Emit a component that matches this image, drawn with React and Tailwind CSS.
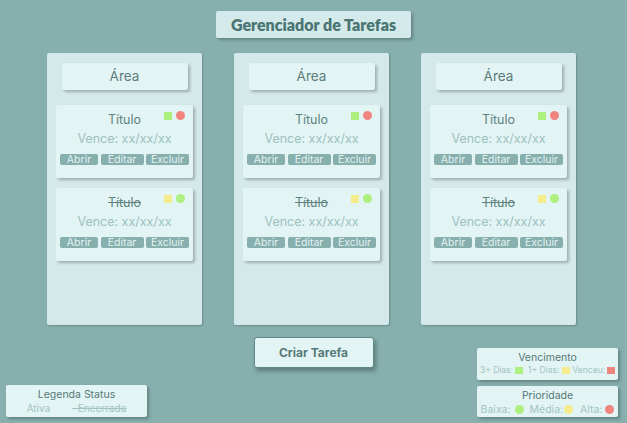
import React from 'react';

const areas = [1, 2, 3];

const tasks = [
  { id: 1, done: false, due: 'bg-[#adf07f]', prio: 'bg-[#f0847f]' },
  { id: 2, done: true, due: 'bg-[#f5ec8c]', prio: 'bg-[#adf07f]' }
];

const TaskCard = ({ task }) => (
  <div className="relative h-[73px] w-[137px] bg-[#e3f4f4] rounded-[2px] shadow-[2px_2px_3px_rgba(0,0,0,0.25)] flex flex-col items-center">
    <div className="absolute top-[6px] right-[8px] flex items-center gap-[4px]">
      <span className={`w-[8px] h-[8px] ${task.due}`}></span>
      <span className={`w-[9px] h-[9px] rounded-full ${task.prio}`}></span>
    </div>
    <p className={`mt-[7px] text-[12.5px] leading-[16px] text-[#5f8280] ${task.done ? 'line-through' : ''}`}>Título</p>
    <p className="mt-[3px] text-[12.5px] leading-[16px] text-[#9cc2c0]">Vence: xx/xx/xx</p>
    <div className="mt-[7px] w-full px-[4px] flex justify-between">
      <button className="w-[38px] h-[11px] bg-[#86afad] rounded-[2px] text-[10.5px] leading-[11px] text-[#e4f2f2]">Abrir</button>
      <button className="w-[43px] h-[11px] bg-[#86afad] rounded-[2px] text-[10.5px] leading-[11px] text-[#e4f2f2]">Editar</button>
      <button className="w-[43px] h-[11px] bg-[#86afad] rounded-[2px] text-[10.5px] leading-[11px] text-[#e4f2f2]">Excluir</button>
    </div>
  </div>
);

const Column = () => (
  <div className="w-[155px] h-[272px] bg-[#d4e9ea] rounded-[2px] shadow-[1px_1px_2px_rgba(0,0,0,0.2)] flex flex-col items-center pt-[10px]">
    <div className="w-[126px] h-[27px] bg-[#e3f4f4] rounded-[2px] shadow-[2px_2px_3px_rgba(0,0,0,0.25)] flex items-center justify-center text-[13.5px] text-[#5a7c7b]">
      Área
    </div>
    <div className="mt-[15px] flex flex-col gap-[10px]">
      {tasks.map(t => <TaskCard key={t.id} task={t} />)}
    </div>
  </div>
);

const App = () => {
  return (
    <div className="w-[627px] h-[423px] bg-[#86afad] overflow-hidden flex flex-col items-center font-['Inter',sans-serif]">
      <div className="mt-[11px] w-[195px] h-[27px] bg-[#d4e9ea] rounded-[2px] shadow-[2px_2px_3px_rgba(0,0,0,0.25)] flex items-center justify-center">
        <h1 className="font-['Lato',sans-serif] font-extrabold text-[16px] text-[#4a7573]">Gerenciador de Tarefas</h1>
      </div>

      <div className="mt-[15px] flex gap-[32px] ml-[-4px]">
        {areas.map(a => <Column key={a} />)}
      </div>

      <div className="w-full flex-1 grid grid-cols-[1fr_auto_1fr] px-[6px] pb-[6px]">
        <div className="self-end">
          <div className="w-[141px] h-[32px] bg-[#e3f4f4] rounded-[2px] shadow-[2px_2px_3px_rgba(0,0,0,0.25)] flex flex-col items-center">
            <p className="mt-[3px] text-[10.5px] leading-[13px] text-[#557876]">Legenda Status</p>
            <div className="mt-[1px] flex gap-[22px] text-[10px] leading-[12px] text-[#a2c4c2]">
              <span>Ativa</span>
              <span className="line-through">&nbsp;&nbsp;Encerrada</span>
            </div>
          </div>
        </div>

        <div className="pt-[12px]">
          <button className="w-[120px] h-[31px] bg-[#e3f4f4] border border-[#5e8987] rounded-[3px] shadow-[2px_3px_4px_rgba(0,0,0,0.3)] text-[12px] font-bold text-[#567a78]">
            Criar Tarefa
          </button>
        </div>

        <div className="self-end flex flex-col items-end gap-[6px] pr-[3px]">
          <div className="w-[141px] h-[32px] bg-[#e3f4f4] rounded-[2px] shadow-[2px_2px_3px_rgba(0,0,0,0.25)] flex flex-col items-center">
            <p className="mt-[3px] text-[10.5px] leading-[13px] text-[#557876]">Vencimento</p>
            <div className="mt-[1px] flex items-center text-[8.5px] leading-[11px] text-[#a2c4c2]">
              <span>3+ Dias:</span>
              <span className="ml-[2px] w-[8px] h-[7px] bg-[#adf07f]"></span>
              <span className="ml-[5px]">1+ Dias:</span>
              <span className="ml-[3px] w-[8px] h-[7px] bg-[#f5ec8c]"></span>
              <span className="ml-[2px]">Venceu:</span>
              <span className="ml-[2px] w-[8px] h-[7px] bg-[#f0847f]"></span>
            </div>
          </div>
          <div className="w-[141px] h-[31px] bg-[#e3f4f4] rounded-[2px] shadow-[2px_2px_3px_rgba(0,0,0,0.25)] flex flex-col items-center">
            <p className="mt-[3px] text-[10.5px] leading-[13px] text-[#557876]">Prioridade</p>
            <div className="mt-[1px] flex items-center text-[10.5px] leading-[13px] text-[#a2c4c2]">
              <span>Baixa:</span>
              <span className="ml-[4px] w-[9px] h-[9px] rounded-full bg-[#adf07f]"></span>
              <span className="ml-[6px]">Média:</span>
              <span className="ml-[1px] w-[9px] h-[9px] rounded-full bg-[#f5ec8c]"></span>
              <span className="ml-[7px]">Alta:</span>
              <span className="ml-[3px] w-[9px] h-[9px] rounded-full bg-[#f0847f]"></span>
            </div>
          </div>
        </div>
      </div>
    </div>
  );
};

export default App;
